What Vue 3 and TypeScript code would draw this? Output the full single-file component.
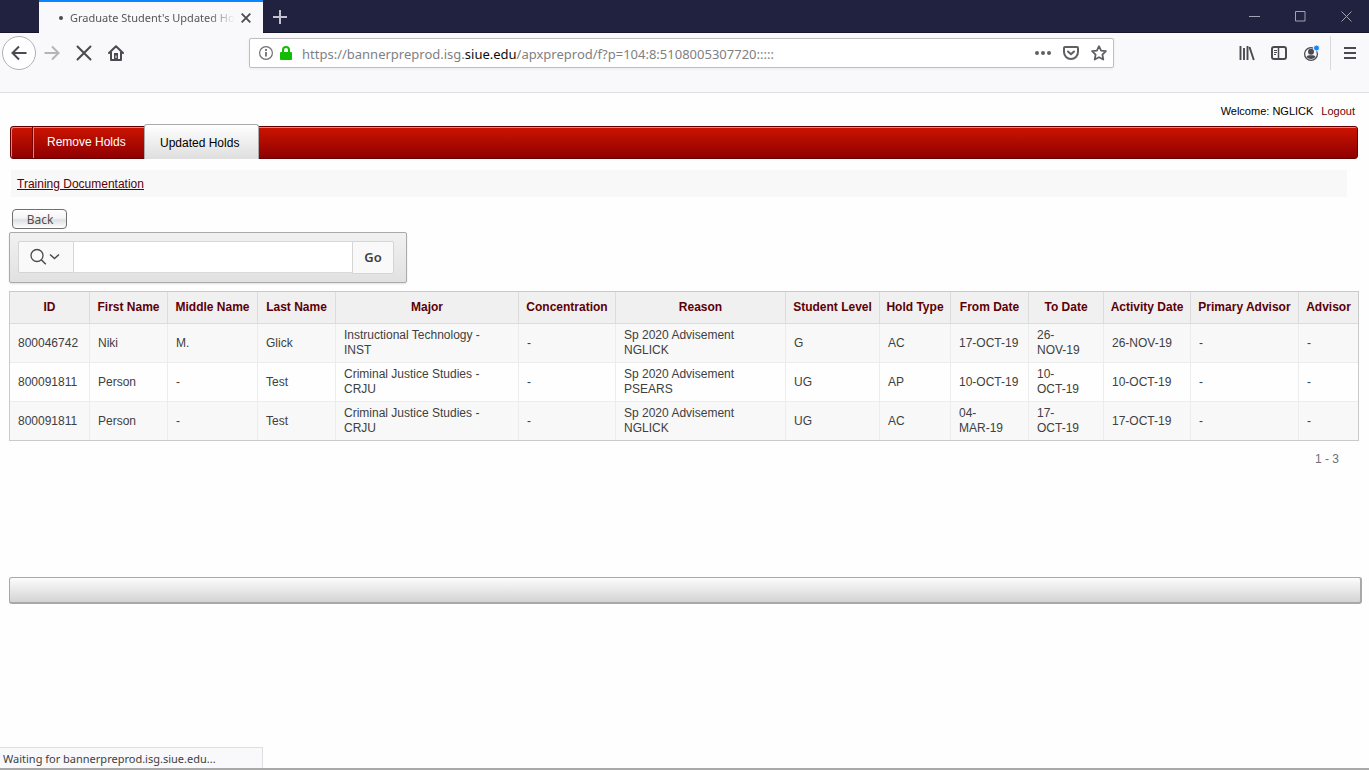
<script setup lang="ts">
import { ref } from 'vue'

interface Column {
  label: string
  width: number
}

const columns: Column[] = [
  { label: 'ID', width: 80 },
  { label: 'First Name', width: 78 },
  { label: 'Middle Name', width: 90 },
  { label: 'Last Name', width: 78 },
  { label: 'Major', width: 183 },
  { label: 'Concentration', width: 97 },
  { label: 'Reason', width: 170 },
  { label: 'Student Level', width: 94 },
  { label: 'Hold Type', width: 71 },
  { label: 'From Date', width: 78 },
  { label: 'To Date', width: 75 },
  { label: 'Activity Date', width: 87 },
  { label: 'Primary Advisor', width: 108 },
  { label: 'Advisor', width: 59 },
]

const rows: string[][] = [
  ['800046742', 'Niki', 'M.', 'Glick', 'Instructional Technology -\nINST', '-', 'Sp 2020 Advisement\nNGLICK', 'G', 'AC', '17-OCT-19', '26-\nNOV-19', '26-NOV-19', '-', '-'],
  ['800091811', 'Person', '-', 'Test', 'Criminal Justice Studies -\nCRJU', '-', 'Sp 2020 Advisement\nPSEARS', 'UG', 'AP', '10-OCT-19', '10-\nOCT-19', '10-OCT-19', '-', '-'],
  ['800091811', 'Person', '-', 'Test', 'Criminal Justice Studies -\nCRJU', '-', 'Sp 2020 Advisement\nNGLICK', 'UG', 'AC', '04-\nMAR-19', '17-\nOCT-19', '17-OCT-19', '-', '-'],
]

const address = {
  before: 'https://bannerpreprod.isg.',
  domain: 'siue.edu',
  after: '/apxpreprod/f?p=104:8:5108005307720:::::',
}
const url = ref(address.before + address.domain + address.after)
const query = ref('')
</script>

<template>
  <div class="window">
    <header class="titlebar">
      <div class="tab">
        <span class="tab-dot"></span>
        <span class="tab-title">Graduate Student's Updated Holds</span>
        <button class="plain" aria-label="Close tab">
          <svg width="10" height="10" viewBox="0 0 10 10"><path d="M.7.7l8.6 8.6M9.3.7L.7 9.3" stroke="#4a4a50" stroke-width="1.8" /></svg>
        </button>
      </div>
      <button class="plain new-tab" aria-label="New tab">
        <svg width="14" height="14" viewBox="0 0 14 14"><path d="M7 0v14M0 7h14" stroke="#c3c3cd" stroke-width="2" /></svg>
      </button>
      <div class="window-controls">
        <button class="plain" aria-label="Minimize"><svg width="11" height="11" viewBox="0 0 11 11"><path d="M0 5.5h11" stroke="#a2a2b2" /></svg></button>
        <button class="plain" aria-label="Maximize"><svg width="11" height="11" viewBox="0 0 11 11"><path d="M.5.5h9.500v9.500h-9.500z" fill="none" stroke="#a2a2b2" /></svg></button>
        <button class="plain" aria-label="Close window"><svg width="11" height="11" viewBox="0 0 11 11"><path d="M.5.5l10 10M10.500.5l-10 10" stroke="#a2a2b2" /></svg></button>
      </div>
    </header>

    <nav class="toolbar" aria-label="Browser">
      <div class="nav-buttons">
        <button class="plain back" aria-label="Back one page">
          <svg width="16" height="16" viewBox="0 0 16 16"><path d="M15.500 8H1.500M8 1.500L1.500 8 8 14.500" fill="none" stroke="#4a4a50" stroke-width="2" /></svg>
        </button>
        <button class="plain" aria-label="Forward one page">
          <svg width="16" height="16" viewBox="0 0 16 16"><path d="M.5 8h14M8 1.500L14.500 8 8 14.500" fill="none" stroke="#b5b5b9" stroke-width="2" /></svg>
        </button>
        <button class="plain" aria-label="Stop loading">
          <svg width="16" height="16" viewBox="0 0 16 16"><path d="M1.500 1.500l13 13M14.500 1.500l-13 13" stroke="#4a4a50" stroke-width="2" stroke-linecap="round" /></svg>
        </button>
        <button class="plain" aria-label="Home">
          <svg width="16" height="16" viewBox="0 0 16 16">
            <path d="M1 8l7-6.700L15 8M3 7v8h10V7" fill="none" stroke="#4a4a50" stroke-width="2" stroke-linecap="round" stroke-linejoin="round" />
            <path d="M6 8h4v7H6z" fill="#4a4a50" /><path d="M7.500 10.500h1V13h-1z" fill="#f9f9fb" />
          </svg>
        </button>
      </div>

      <div class="address-bar">
        <svg width="14" height="14" viewBox="0 0 14 14"><circle cx="7" cy="7" r="6.400" fill="none" stroke="#6f6f73" stroke-width="1.200" /><path d="M7 6v4.500M7 3v2" stroke="#6f6f73" stroke-width="1.800" /></svg>
        <svg width="12" height="14" viewBox="0 0 12 14"><path d="M3 7V4a3 3 0 0 1 6 0v3" fill="none" stroke="#12bc00" stroke-width="2" /><rect y="6" width="12" height="8" rx="1" fill="#12bc00" /></svg>
        <div class="address">
          <input v-model="url" type="text" aria-label="Address" spellcheck="false" />
          <span class="address-text" aria-hidden="true">{{ address.before }}<b>{{ address.domain }}</b>{{ address.after }}</span>
        </div>
        <button class="plain" aria-label="Page actions">
          <svg width="16" height="16" viewBox="0 0 16 16" fill="#5f5f64"><circle cx="2" cy="8" r="2" /><circle cx="8" cy="8" r="2" /><circle cx="14" cy="8" r="2" /></svg>
        </button>
        <button class="plain" aria-label="Save to Pocket">
          <svg width="16" height="16" viewBox="0 0 16 16" fill="none" stroke="#5f5f64" stroke-width="2" stroke-linecap="round" stroke-linejoin="round"><path d="M2 2h12a1 1 0 0 1 1 1v4a7 7 0 0 1-14 0V3a1 1 0 0 1 1-1z" /><path d="M5 6.500L8 9.300l3-2.800" /></svg>
        </button>
        <button class="plain" aria-label="Bookmark this page">
          <svg width="16" height="16" viewBox="0 0 16 16"><path d="M8 1.200l2.100 4.400 4.800.6-3.500 3.400.9 4.900L8 12.200l-4.300 2.300.9-4.900L1.100 6.200l4.800-.6z" fill="none" stroke="#5f5f64" stroke-width="1.800" stroke-linejoin="round" /></svg>
        </button>
      </div>

      <div class="tools">
        <button class="plain" aria-label="Library">
          <svg width="16" height="16" viewBox="0 0 16 16"><path d="M1.500 1v14M5 3v12M8.500 1v14M10.500 2l4.300 13" fill="none" stroke="#4a4a50" stroke-width="1.900" /></svg>
        </button>
        <button class="plain" aria-label="Sidebars">
          <svg width="16" height="16" viewBox="0 0 16 16" fill="none" stroke="#4a4a50"><rect x="1" y="2" width="14" height="12" rx="2" stroke-width="2" /><path d="M7.500 2v12" stroke-width="1.500" /><path d="M3 5.500h3M3 7.500h3M3 9.500h2" /></svg>
        </button>
        <button class="plain" aria-label="Account">
          <svg width="18" height="18" viewBox="0 0 18 18"><circle cx="8" cy="10" r="6.400" fill="none" stroke="#4a4a50" stroke-width="1.300" /><circle cx="8" cy="7.800" r="3" fill="#4a4a50" /><path d="M3.500 13c1-2 2.500-1.800 4.500-1.800s3.500-.2 4.500 1.800c-2.500 2.500-6.500 2.500-9 0z" fill="#4a4a50" /><circle cx="13.500" cy="4" r="3" fill="#1486ff" stroke="#f9f9fb" /></svg>
        </button>
        <span class="divider"></span>
        <button class="plain" aria-label="Menu">
          <svg width="12" height="12" viewBox="0 0 12 12"><path d="M0 1h12M0 6h12M0 11h12" stroke="#4a4a50" stroke-width="2" /></svg>
        </button>
      </div>
    </nav>

    <main class="page">
      <div class="user">
        <span>Welcome: NGLICK</span>
        <a href="#logout">Logout</a>
      </div>

      <nav class="tabs" aria-label="Holds">
        <span class="tabs-start"></span>
        <a class="tabs-item" href="#remove">Remove Holds</a>
        <a class="tabs-item current" href="#updated" aria-current="page">Updated Holds</a>
      </nav>

      <div class="links"><a href="#training">Training Documentation</a></div>

      <button class="back-button">Back</button>

      <form class="search" @submit.prevent>
        <button type="button" class="search-menu" aria-label="Select columns to search">
          <svg width="32" height="18" viewBox="0 0 32 18" fill="none" stroke="#4b4b4b"><circle cx="7" cy="7.500" r="6" stroke-width="1.300" /><path d="M11.300 11.800l4.500 4.500" stroke-width="1.500" /><path d="M20 6.500l4.500 4 4.500-4" stroke-width="1.500" /></svg>
        </button>
        <input v-model="query" type="text" aria-label="Search report" />
        <button class="go">Go</button>
      </form>

      <table>
        <colgroup>
          <col v-for="c in columns" :key="c.label" :style="{ width: c.width + 'px' }" />
        </colgroup>
        <thead>
          <tr><th v-for="c in columns" :key="c.label" scope="col">{{ c.label }}</th></tr>
        </thead>
        <tbody>
          <tr v-for="(row, r) in rows" :key="r">
            <td v-for="(cell, i) in row" :key="i">{{ cell }}</td>
          </tr>
        </tbody>
      </table>
      <p class="paging">1 - 3</p>

      <div class="page-end"></div>
    </main>

    <footer class="status"><span>Waiting for bannerpreprod.isg.siue.edu...</span></footer>
  </div>
</template>

<style>
body {
  margin: 0;
  background: #fefefe;
}
</style>

<style scoped>
.window {
  display: flex;
  flex-direction: column;
  min-height: 100vh;
  box-sizing: border-box;
  font-family: "Liberation Sans", Arial, sans-serif;
  font-size: 12px;
  color: #404040;
}
.window * {
  box-sizing: border-box;
}
svg {
  display: block;
  flex: none;
}
button,
input {
  font: inherit;
  color: inherit;
  margin: 0;
}
.plain {
  display: grid;
  place-items: center;
  padding: 0;
  border: 0;
  background: none;
}

/* Browser frame */
.titlebar {
  display: flex;
  height: 33px;
  padding-left: 39px;
  background: #20223f;
  box-shadow: inset 0 -1px #15162b;
}
.tab {
  display: flex;
  align-items: center;
  width: 224px;
  padding: 0 12px 0 20px;
  border-top: 2px solid #0a84ff;
  background: #f9f9fb;
  font-family: "Noto Sans", sans-serif;
  font-size: 11px;
  color: #55555a;
}
.tab-dot {
  width: 4px;
  height: 4px;
  margin-right: 7px;
  border-radius: 50%;
  background: #4a4a50;
}
.tab-title {
  flex: 1;
  margin-right: 6px;
  overflow: hidden;
  white-space: nowrap;
  mask-image: linear-gradient(to right, #000 84%, transparent);
}
.new-tab {
  width: 34px;
}
.window-controls {
  display: flex;
  align-items: center;
  gap: 35px;
  margin-left: auto;
  padding-right: 17px;
}
.toolbar {
  display: flex;
  align-items: flex-start;
  height: 60px;
  border-bottom: 1px solid #dedee1;
  background: #f9f9fb;
}
.nav-buttons {
  display: flex;
  align-items: center;
  gap: 16px;
  width: 249px;
  height: 40px;
  padding-left: 2px;
}
.back {
  width: 34px;
  height: 34px;
  margin-right: -8px;
  border: 1px solid #b1b1b5;
  border-radius: 50%;
  background: #fff;
}
.address-bar {
  display: flex;
  flex: 1;
  align-items: center;
  height: 30px;
  margin-top: 5px;
  padding: 0 6px 0 9px;
  border: 1px solid #bebec1;
  border-radius: 2px;
  background: #fff;
  box-shadow: 0 1px 3px rgba(0, 0, 0, 0.06);
}
.address-bar > * + * {
  margin-left: 12px;
}
.address-bar > svg + svg {
  margin-left: 7px;
}
.address-bar > .address {
  margin-left: 10px;
}
.address {
  display: grid;
  flex: 1;
  align-items: center;
  padding-top: 2px;
  font-family: "Noto Sans", sans-serif;
  font-size: 13px;
  line-height: 20px;
}
.address > * {
  grid-area: 1 / 1;
}
.address input {
  width: 100%;
  padding: 0;
  border: 0;
  outline: 0;
  background: none;
  color: transparent;
}
.address-text {
  color: #808083;
  white-space: nowrap;
  pointer-events: none;
}
.address-text b {
  font-weight: 400;
  color: #0c0c0d;
}
.tools {
  display: flex;
  align-items: center;
  justify-content: flex-end;
  gap: 16px;
  width: 255px;
  height: 40px;
  padding-right: 13px;
}
.divider {
  width: 1px;
  height: 34px;
  margin: 0 -3px 0 -7px;
  background: #d9d9dc;
}

/* Page */
.page {
  flex: 1;
  padding: 11px 7px 0 9px;
}
.user {
  display: flex;
  justify-content: flex-end;
  gap: 8px;
  padding-right: 7px;
  font-size: 11px;
  line-height: 15px;
  color: #000;
}
.user a {
  color: #6b0008;
  text-decoration: none;
}
.tabs {
  display: flex;
  align-items: flex-end;
  height: 33px;
  margin: 7px 4px 0 1px;
  border: 1px solid #600;
  border-radius: 3px;
  background: linear-gradient(#cc1400, #8f0000);
  box-shadow: inset 1px 1px #e48379;
}
.tabs-start {
  align-self: stretch;
  width: 22px;
  border-right: 1px solid #700;
  box-shadow: 1px 0 #e48379;
}
.tabs-item {
  height: 31px;
  min-width: 111px;
  padding: 0 14px;
  line-height: 30px;
  color: #fff;
  text-decoration: none;
  white-space: nowrap;
}
.tabs-item.current {
  height: 35px;
  min-width: 115px;
  margin: 0 0 -1px;
  padding: 0 15px;
  border: 1px solid #aaa;
  border-bottom: 0;
  border-radius: 3px 3px 0 0;
  background: linear-gradient(#fff, #dedede);
  line-height: 36px;
  color: #000;
}
.links {
  margin: 11px 15px 0 2px;
  padding: 1px 6px 0;
  background: #f8f8f8;
  line-height: 26px;
}
.links a {
  color: #5c0007;
}
.back-button {
  display: block;
  width: 55px;
  height: 20px;
  margin: 12px 0 0 3px;
  padding: 1px 0 0 1px;
  border: 1px solid #707070;
  border-radius: 4px;
  background: linear-gradient(#fff, #f4f4f4 45%, #dddfe2 55%, #fff);
  font-family: "Noto Sans", sans-serif;
  line-height: 18px;
  color: #505050;
}
.search {
  display: flex;
  width: 398px;
  height: 51px;
  margin-top: 3px;
  padding: 8px 8px 0;
  border: 1px solid #aaa;
  border-radius: 2px;
  background: linear-gradient(#f1f1f1, #e1e1e1);
  box-shadow: 0 1px 2px rgba(0, 0, 0, 0.12);
}
.search-menu,
.go {
  display: grid;
  place-items: center;
  width: 56px;
  height: 32px;
  padding: 0;
  border: 1px solid #d5d5d5;
  border-radius: 2px 0 0 2px;
  background: #f9f9f9;
}
.search input {
  flex: 1;
  min-width: 0;
  height: 32px;
  padding: 0 8px;
  border: solid #d9d9d9;
  border-width: 1px 0;
  outline: 0;
  background: #fff;
}
.go {
  width: 42px;
  height: 33px;
  margin-right: 4px;
  padding-bottom: 2px;
  border-radius: 0 2px 2px 0;
  font-family: "Noto Sans", sans-serif;
  font-size: 13px;
  font-weight: 600;
}
table {
  width: calc(100% - 3px);
  margin-top: 8px;
  table-layout: fixed;
  border: 1px solid #cacaca;
  border-collapse: separate;
  border-spacing: 0;
}
th,
td {
  border-right: 1px solid #ececec;
  border-bottom: 1px solid #ececec;
  line-height: 15px;
  white-space: pre-line;
}
th {
  height: 32px;
  padding: 0 4px 1px;
  border-color: #dcdcdc;
  background: #f0f0f0;
  color: #5c0007;
  white-space: nowrap;
}
td {
  height: 39px;
  padding: 4px 0 4px 8px;
}
th:last-child,
td:last-child {
  border-right: 0;
}
tbody tr:nth-child(odd) {
  background: #f8f8f8;
}
tbody tr:last-child td {
  height: 38px;
  border-bottom: 0;
}
.paging {
  margin: 11px 23px 0 0;
  text-align: right;
  line-height: 15px;
  color: #707070;
}
.page-end {
  height: 27px;
  margin-top: 110px;
  border: 1px solid #a8a8a8;
  border-width: 1px 2px 2px 1px;
  border-radius: 3px;
  background: linear-gradient(#fcfcfc, #d4d4d4);
}
.status {
  display: flex;
  border-bottom: 2px solid #a9a9a9;
  font-family: "Noto Sans", sans-serif;
  font-size: 11px;
}
.status span {
  width: 263px;
  padding: 1px 0 0 3px;
  border: solid #dedee1;
  border-width: 1px 1px 0 0;
  background: #f9f9fb;
  line-height: 19px;
  white-space: nowrap;
}
</style>
